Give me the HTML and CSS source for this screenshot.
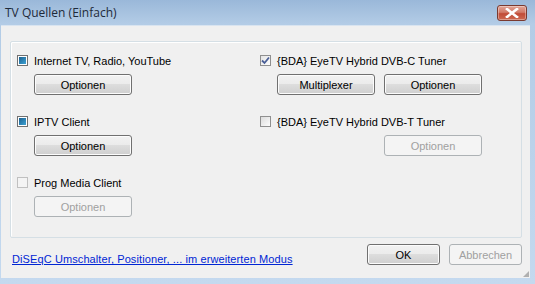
FILE: index.html
```html
<!DOCTYPE html>
<html>
<head>
<meta charset="utf-8">
<link rel="stylesheet" href="styles.css">
</head>
<body>
<div class="window">
  <div class="titlebar">
    <span class="title">TV Quellen (Einfach)</span>
    <div class="close">
      <svg width="14" height="10" viewBox="0 0 14 10"><path d="M2 1 L12 9 M12 1 L2 9" stroke="#fff" stroke-width="2.6" stroke-linecap="square"/></svg>
    </div>
  </div>
  <div class="client">
    <div class="group">
      <div class="col">
        <div class="item">
          <label class="check"><span class="box ind"></span>Internet TV, Radio, YouTube</label>
          <div class="btns"><button class="btn">Optionen</button></div>
        </div>
        <div class="item">
          <label class="check"><span class="box ind"></span>IPTV Client</label>
          <div class="btns"><button class="btn">Optionen</button></div>
        </div>
        <div class="item">
          <label class="check"><span class="box dis"></span>Prog Media Client</label>
          <div class="btns"><button class="btn disabled">Optionen</button></div>
        </div>
      </div>
      <div class="col">
        <div class="item">
          <label class="check"><span class="box chk"><svg width="9" height="9" viewBox="0 0 9 9"><path d="M1 4.5 L3.5 7 L8 1.5" fill="none" stroke="#4a5f97" stroke-width="1.8"/></svg></span>{BDA} EyeTV Hybrid DVB-C Tuner</label>
          <div class="btns"><button class="btn">Multiplexer</button><button class="btn">Optionen</button></div>
        </div>
        <div class="item">
          <label class="check"><span class="box"></span>{BDA} EyeTV Hybrid DVB-T Tuner</label>
          <div class="btns end"><button class="btn disabled">Optionen</button></div>
        </div>
      </div>
    </div>
    <div class="footer">
      <a class="link" href="#">DiSEqC Umschalter, Positioner, ... im erweiterten Modus</a>
      <div class="actions"><button class="btn ok">OK</button><button class="btn disabled cancel">Abbrechen</button></div>
    </div>
    <div class="grip"></div>
  </div>
</div>
</body>
</html>
```
FILE: styles.css
```css
html, body { margin: 0; padding: 0; }
body { width: 535px; height: 284px; overflow: hidden; background: #c4d9ef; font-family: "Liberation Sans", Arial, sans-serif; }
.window { width: 535px; height: 284px; display: flex; flex-direction: column; background: linear-gradient(to bottom, #9ab8d9 0px, #b3cce6 24px, #c4d9ef 100%); }
.titlebar { height: 25px; display: flex; align-items: flex-start; justify-content: space-between; padding: 0 8px 0 5px; box-sizing: border-box; }
.title { font-family: "Open Sans", "Noto Sans", sans-serif; font-size: 12px; color: #1e2a3a; margin-top: 4px; letter-spacing: 0; }
.close { width: 30px; height: 16px; margin-top: 5px; border: 1px solid #7a3a30; border-radius: 3px; box-sizing: border-box; background: linear-gradient(to bottom, #e2a597 0%, #d27a68 45%, #c14b37 55%, #cc6a52 100%); display: flex; align-items: center; justify-content: center; box-shadow: inset 0 0 0 1px rgba(255,255,255,0.35); }
.client { position: relative; margin: 0 5px 6px 1px; flex: 1; background: #f0f0f0; border-top: 1px solid #d9e4f0; padding: 15px 8px 0 9px; display: flex; flex-direction: column; }
.group { border: 1px solid #d5dfe5; border-radius: 2px; box-shadow: 1px 1px 0 #fff inset; height: 197px; box-sizing: border-box; display: flex; padding: 12px 0 0 6px; }
.col { width: 243px; display: flex; flex-direction: column; gap: 20px; }
.item { display: flex; flex-direction: column; gap: 7px; }
.check { display: flex; align-items: center; gap: 6px; font-size: 11px; color: #000; height: 13px; white-space: nowrap; }
.box { width: 11px; height: 11px; box-sizing: border-box; border: 1px solid #8f8f8f; background: linear-gradient(135deg, #dcdcdc, #fcfcfc); display: flex; align-items: center; justify-content: center; flex: none; }
.box.ind { background: #fff; border-color: #707070; padding: 1px; }
.box.ind::after { content: ""; width: 7px; height: 7px; background: linear-gradient(135deg, #1b5f8e, #3da2d4); }
.box.dis { border-color: #c0c0c0; background: #f4f4f4; }
.box.chk { background: linear-gradient(135deg, #e4e4e4, #fdfdfd); }
.btns { display: flex; gap: 9px; padding-left: 17px; }
.btns.end { padding-left: 124px; }
.btn { width: 98px; height: 21px; box-sizing: border-box; border: 1px solid #707070; border-radius: 3px; background: linear-gradient(to bottom, #f2f2f2 0%, #ebebeb 49%, #dddddd 50%, #cfcfcf 100%); font-family: "Liberation Sans", Arial, sans-serif; font-size: 11px; color: #000; padding: 0; box-shadow: inset 0 0 0 1px #fcfcfc; }
.btn.disabled { border-color: #adb2b5; background: #f4f4f4; color: #a0a0a0; box-shadow: none; }
.footer { display: flex; justify-content: space-between; align-items: center; padding: 6px 0 0 2px; }
.link { font-size: 11px; letter-spacing: 0.1px; color: #0026d4; text-decoration: underline; margin-top: 9px; }
.actions { display: flex; gap: 9px; }
.btn.ok, .btn.cancel { width: 73px; }
.grip { position: absolute; right: 1px; bottom: 1px; width: 6px; height: 6px; background: radial-gradient(circle, #b0b0b0 0.8px, transparent 1px) 0 0 / 2px 2px; clip-path: polygon(100% 0, 100% 100%, 0 100%); }
```
